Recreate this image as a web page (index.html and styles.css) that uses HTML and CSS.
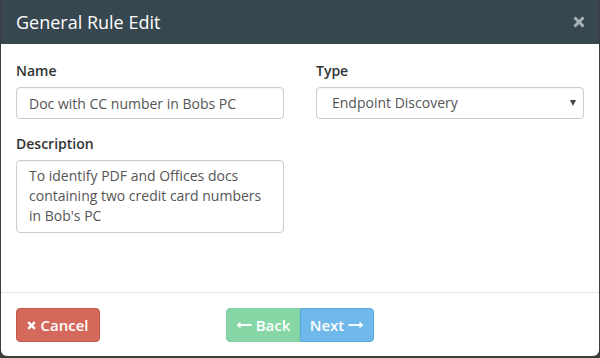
FILE: index.html
```html
<!DOCTYPE html>
<html lang="en">
<head>
    <meta charset="UTF-8">
    <title>General Rule Edit</title>
    <link rel="stylesheet" href="styles.css">
</head>
<body>
    <div class="modal">
        <div class="modal-header">
            <h4 class="modal-title">General Rule Edit</h4>
            <span class="close">
                <svg width="12" height="12" viewBox="0 0 12 12"><path d="M1.5 1.5 L10.5 10.5 M10.5 1.5 L1.5 10.5" stroke="#a9b2b6" stroke-width="3"/></svg>
            </span>
        </div>

        <div class="modal-body">
            <div class="col">
                <div class="form-group">
                    <label>Name</label>
                    <input type="text" class="form-control" value="Doc with CC number in Bobs PC">
                </div>
                <div class="form-group">
                    <label>Description</label>
                    <textarea class="form-control" rows="3">To identify PDF and Offices docs
containing two credit card numbers
in Bob's PC</textarea>
                </div>
            </div>
            <div class="col">
                <div class="form-group">
                    <label>Type</label>
                    <div class="select-wrap">
                        <select class="form-control">
                            <option>Endpoint Discovery</option>
                        </select>
                    </div>
                </div>
            </div>
        </div>

        <div class="modal-footer">
            <button class="btn btn-danger">
                <svg width="9" height="9" viewBox="0 0 9 9"><path d="M1.2 1.2 L7.8 7.8 M7.8 1.2 L1.2 7.8" stroke="#fff" stroke-width="2.4"/></svg>
                Cancel
            </button>
            <div class="btn-group">
                <button class="btn btn-success">
                    <svg width="16" height="8" viewBox="0 0 16 8"><path d="M15.5 4 H3" stroke="#fff" stroke-width="1.8"/><path d="M0.5 4 L4.5 0.8 V7.2 Z" fill="#fff"/></svg>
                    Back
                </button>
                <button class="btn btn-primary">
                    Next
                    <svg width="16" height="8" viewBox="0 0 16 8"><path d="M0.5 4 H13" stroke="#fff" stroke-width="1.8"/><path d="M15.5 4 L11.5 0.8 V7.2 Z" fill="#fff"/></svg>
                </button>
            </div>
        </div>
    </div>
</body>
</html>
```

FILE: styles.css
```css
body {
    margin: 0;
    background: #3d3d3d;
    font-family: 'Open Sans', 'Liberation Sans', sans-serif;
    color: #333;
}

.modal {
    width: 598px;
    height: 356px;
    margin-left: 1px;
    background: #fff;
    border-radius: 0 0 6px 6px;
    display: flex;
    flex-direction: column;
    overflow: hidden;
}

.modal-header {
    height: 44px;
    background: #37474f;
    display: flex;
    align-items: center;
    justify-content: space-between;
    padding: 0 14px 0 15px;
}

.modal-title {
    margin: 0;
    color: #fff;
    font-size: 18px;
    font-weight: 400;
}

.close {
    display: flex;
    margin-top: -1px;
}

.modal-body {
    flex: 1;
    padding: 17px 15px 0 15px;
    display: flex;
    gap: 32px;
}

.col {
    width: 268px;
}

.form-group {
    margin-bottom: 15px;
}

label {
    display: block;
    font-size: 14px;
    font-weight: 600;
    line-height: 20px;
    margin-bottom: 6px;
}

.form-control {
    display: block;
    width: 100%;
    box-sizing: border-box;
    border: 1px solid #ccc;
    border-radius: 4px;
    padding: 5px 12px;
    font-family: inherit;
    font-size: 14px;
    line-height: 20px;
    color: #555;
    background: #fff;
    box-shadow: inset 0 1px 1px rgba(0, 0, 0, 0.04);
}

input.form-control {
    height: 32px;
}

textarea.form-control {
    height: 73px;
    resize: none;
    overflow: hidden;
}

.select-wrap {
    position: relative;
}

select.form-control {
    height: 32px;
    padding-left: 15px;
    appearance: none;
    -webkit-appearance: none;
}

.select-wrap::after {
    content: "";
    position: absolute;
    right: 8px;
    top: 13px;
    border-left: 3.5px solid transparent;
    border-right: 3.5px solid transparent;
    border-top: 6px solid #444;
}

.modal-footer {
    border-top: 1px solid #e5e5e5;
    padding: 15px 15px 14px 15px;
    display: flex;
    align-items: center;
}

.btn {
    height: 34px;
    padding: 0;
    border: 1px solid transparent;
    border-radius: 4px;
    font-family: inherit;
    font-size: 15px;
    font-weight: 600;
    color: #fff;
    display: flex;
    align-items: center;
    justify-content: center;
    gap: 4px;
    cursor: pointer;
}

.btn svg {
    flex-shrink: 0;
}

.btn-danger {
    width: 84px;
    background: #d4695b;
    border-color: #c85a4c;
}

.btn-group {
    display: flex;
    margin-left: 126px;
}

.btn-success {
    width: 74px;
    background: #86d6a6;
    border-color: #7fd1a0;
    border-radius: 4px 0 0 4px;
}

.btn-primary {
    width: 74px;
    background: #6fb8ea;
    border-color: #58a9e2;
    border-radius: 0 4px 4px 0;
}
```
